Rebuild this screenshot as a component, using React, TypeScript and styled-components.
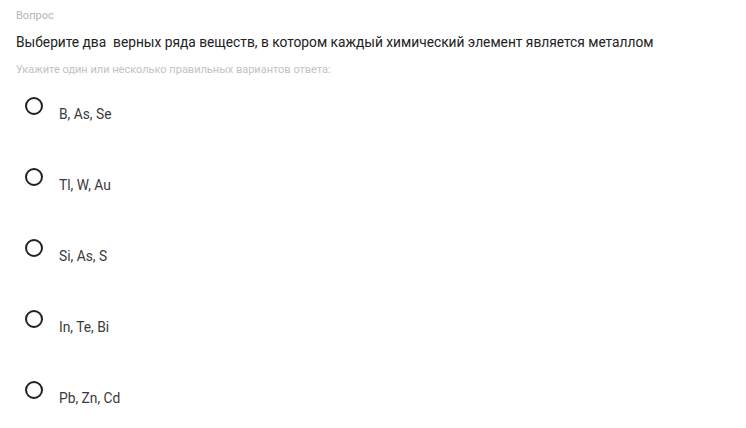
import React from 'react'
import styled, { createGlobalStyle } from 'styled-components'

const GlobalStyle = createGlobalStyle`
  html, body {
    margin: 0;
    padding: 0;
    background: #fff;
  }
  body {
    font-family: Roboto, 'Liberation Sans', Arial, sans-serif;
  }
`

const Page = styled.div`
  width: 746px;
  height: 428px;
  padding: 9px 16px 0;
  box-sizing: border-box;
  overflow: hidden;
`

const Caption = styled.div`
  font-size: 11px;
  line-height: 14px;
  color: #b5b5b5;
`

const Question = styled.div`
  margin-top: 10px;
  font-size: 13.75px;
  line-height: 18px;
  color: #222;
`

const Hint = styled.div`
  margin-top: 12px;
  font-size: 11px;
  line-height: 14px;
  color: #c2c2c2;
`

const Options = styled.ul`
  list-style: none;
  margin: 20px 0 0;
  padding: 0 0 0 9px;
  display: flex;
  flex-direction: column;
  gap: 35px;
`

const Option = styled.li`
  display: flex;
  align-items: flex-start;
  height: 36px;
`

const Radio = styled.span`
  width: 14px;
  height: 14px;
  border: 2px solid #222;
  border-radius: 50%;
  flex: none;
`

const OptionText = styled.span`
  margin: 9px 0 0 16px;
  font-size: 13.8px;
  line-height: 16px;
  color: #3a3a3a;
`

const answers = ['B, As, Se', 'Tl, W, Au', 'Si, As, S', 'In, Te, Bi', 'Pb, Zn, Cd']

export default function App() {
  return (
    <Page>
      <GlobalStyle />
      <Caption>Вопрос</Caption>
      <Question>Выберите два{'\u00a0'} верных ряда веществ, в котором каждый химический элемент является металлом</Question>
      <Hint>Укажите один или несколько правильных вариантов ответа:</Hint>
      <Options>
        {answers.map((a) => (
          <Option key={a}>
            <Radio />
            <OptionText>{a}</OptionText>
          </Option>
        ))}
      </Options>
    </Page>
  )
}
